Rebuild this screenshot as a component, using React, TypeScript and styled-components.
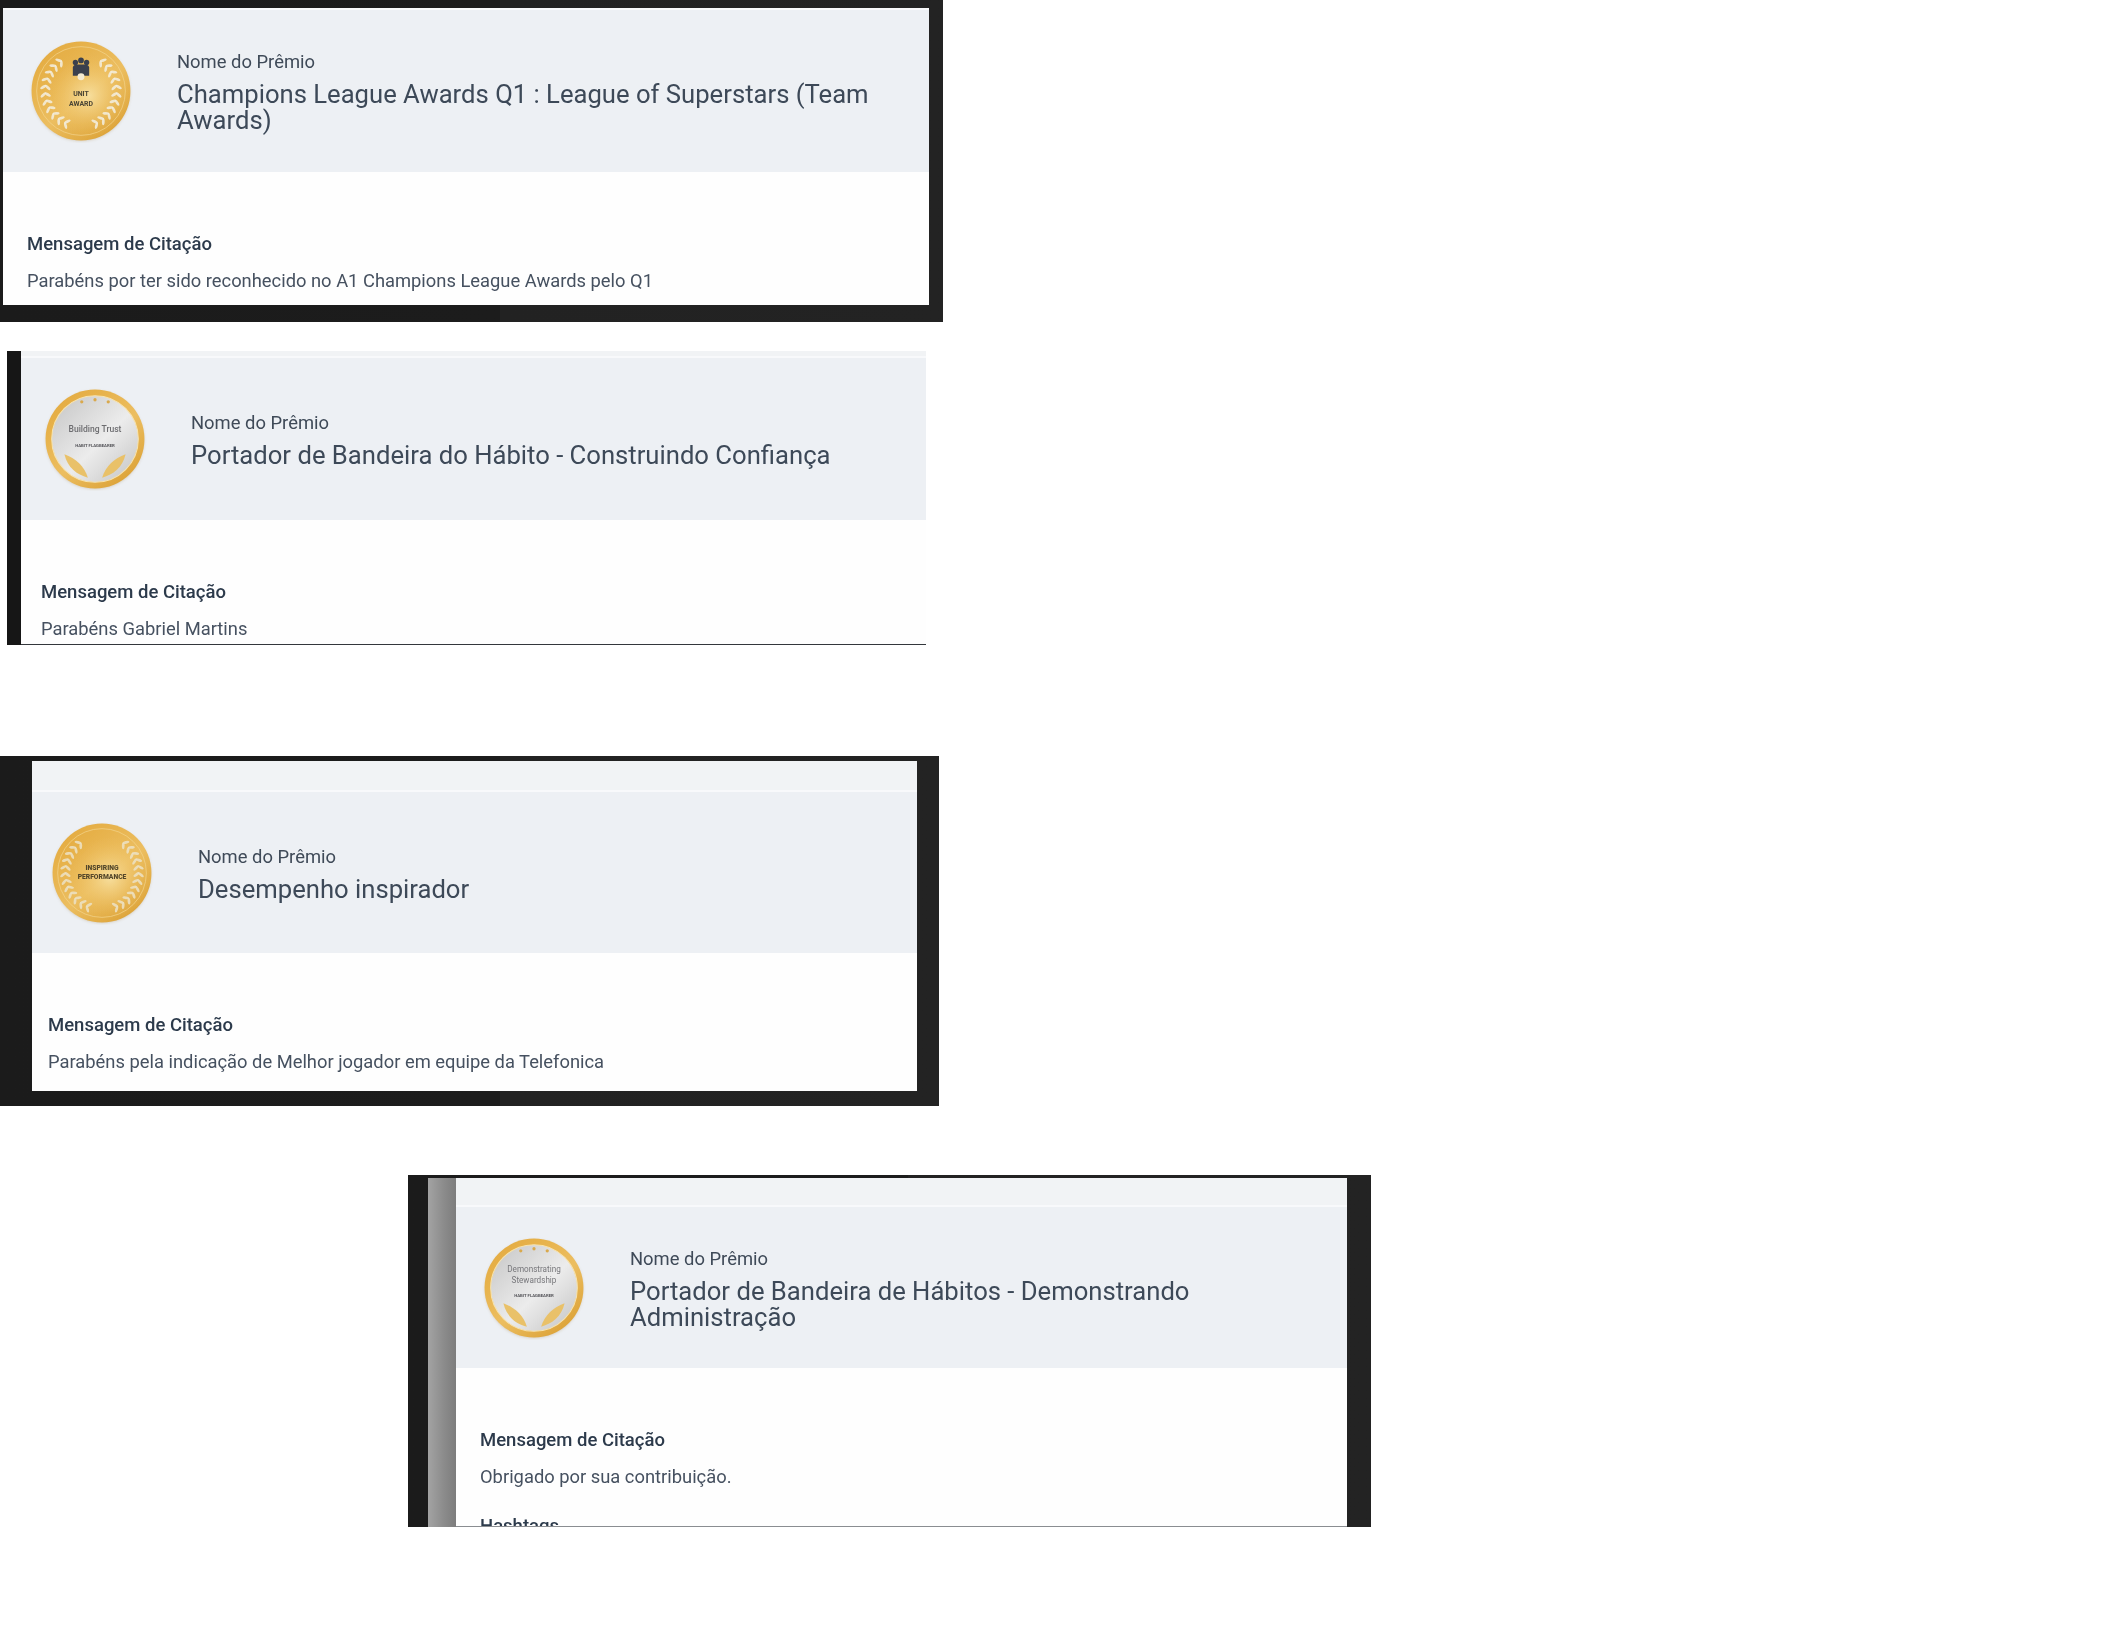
import React from "react";
import styled, { createGlobalStyle } from "styled-components";

const Global = createGlobalStyle`
  html, body { margin: 0; padding: 0; background: #ffffff; }
  body { font-family: Roboto, "Liberation Sans", sans-serif; }
`;

const Page = styled.main`
  display: flex;
  flex-direction: column;
  align-items: flex-start;
  width: 2124px;
  height: 1636px;
  overflow: hidden;
`;

const Frame = styled.section<{ $w: number; $h: number; $ml: number; $mt: number; $pad: string; $bg: string }>`
  display: flex;
  flex: none;
  box-sizing: border-box;
  width: ${(p) => p.$w}px;
  height: ${(p) => p.$h}px;
  margin: ${(p) => p.$mt}px 0 0 ${(p) => p.$ml}px;
  padding: ${(p) => p.$pad};
  background: ${(p) => p.$bg};
`;

const SideShade = styled.div`
  flex: none;
  width: 28px;
  background: linear-gradient(90deg, #a3a3a3 0%, #8a8a8a 60%, #7d7d7d 100%);
`;

const Panel = styled.article<{ $line?: string }>`
  flex: 1;
  min-width: 0;
  display: flex;
  flex-direction: column;
  overflow: hidden;
  background: #fefefe;
  border-bottom: ${(p) => (p.$line ? `1px solid ${p.$line}` : "none")};
`;

const TopStrip = styled.div<{ $h: number }>`
  flex: none;
  box-sizing: border-box;
  height: ${(p) => p.$h}px;
  background: #f1f3f5;
  border-bottom: 2px solid #f8f9fb;
`;

const Header = styled.header<{ $h: number; $inset: number }>`
  flex: none;
  display: flex;
  align-items: center;
  gap: 44px;
  box-sizing: border-box;
  height: ${(p) => p.$h}px;
  padding: 0 30px 0 ${(p) => p.$inset}px;
  background: #edf0f4;
`;

const MedalBox = styled.div`
  flex: none;
  width: 104px;
  height: 104px;
`;

const Titles = styled.div`
  display: flex;
  flex-direction: column;
  gap: 7px;
  min-width: 0;
  padding-top: 1px;
  filter: blur(0.35px);
`;

const AwardLabel = styled.span`
  font-size: 18.4px;
  line-height: 24px;
  color: #3f4a58;
`;

const AwardName = styled.h2`
  margin: 0;
  font-size: 25.65px;
  line-height: 26px;
  font-weight: 400;
  color: #3d4958;
`;

const Body = styled.div<{ $inset: number }>`
  display: flex;
  flex-direction: column;
  gap: 13px;
  padding: 60px 10px 0 ${(p) => p.$inset}px;
  filter: blur(0.35px);
`;

const Heading = styled.h3<{ $mt?: number }>`
  margin: ${(p) => p.$mt ?? 0}px 0 0;
  font-size: 18.5px;
  line-height: 24px;
  font-weight: 500;
  color: #2c3a4b;
`;

const Message = styled.p`
  margin: 0;
  font-size: 18.35px;
  line-height: 24px;
  color: #465160;
`;

type Kind = "unit" | "trust" | "inspiring" | "stewardship";

function Laurel({ color, count, from, to, r }: { color: string; count: number; from: number; to: number; r: number }) {
  const leaves = [];
  for (const side of [-1, 1]) {
    for (let i = 0; i < count; i++) {
      const deg = from + ((to - from) * i) / (count - 1);
      const rad = (deg * Math.PI) / 180;
      const x = 50 + side * r * Math.sin(rad);
      const y = 50 - r * Math.cos(rad);
      for (const tilt of [-38, 38]) {
        const off = tilt > 0 ? 2.2 : -2.2;
        const lx = x + side * off * Math.sin(rad);
        const ly = y - off * Math.cos(rad);
        leaves.push(
          <ellipse
            key={`${side}-${i}-${tilt}`}
            cx={lx}
            cy={ly}
            rx={1.35}
            ry={3.4}
            fill={color}
            opacity={0.85}
            transform={`rotate(${side * (deg - 180 + tilt)} ${lx} ${ly})`}
          />
        );
      }
    }
  }
  return <g>{leaves}</g>;
}

function Medal({ kind }: { kind: Kind }) {
  const id = `m-${kind}`;
  const silver = kind === "trust" || kind === "stewardship";
  return (
    <svg width="104" height="104" viewBox="-1 -1 102 102" role="img" aria-label={kind}>
      <defs>
        <linearGradient id={`${id}-gold`} x1="0.1" y1="0" x2="0.9" y2="1">
          <stop offset="0" stopColor="#e3a93c" />
          <stop offset="0.55" stopColor="#ecbe60" />
          <stop offset="1" stopColor="#d99d30" />
        </linearGradient>
        <radialGradient id={`${id}-shine`} cx="0.58" cy="0.55" r="0.42">
          <stop offset="0" stopColor="#f8e2a4" stopOpacity="0.9" />
          <stop offset="1" stopColor="#f0c15f" stopOpacity="0" />
        </radialGradient>
        <linearGradient id={`${id}-silver`} x1="0" y1="0" x2="1" y2="1">
          <stop offset="0" stopColor="#c4c4c4" />
          <stop offset="0.55" stopColor="#ececec" />
          <stop offset="1" stopColor="#c2c2c2" />
        </linearGradient>
        <filter id={`${id}-soft`} x="-10%" y="-10%" width="120%" height="120%">
          <feGaussianBlur stdDeviation="0.5" />
        </filter>
        <filter id={`${id}-shadow`} x="-20%" y="-20%" width="140%" height="140%">
          <feGaussianBlur stdDeviation="1.4" />
        </filter>
      </defs>
      <circle cx="50" cy="51" r="48" fill="#b9a684" opacity="0.5" filter={`url(#${id}-shadow)`} />
      <g filter={`url(#${id}-soft)`}>
        <circle cx="50" cy="50" r="48.5" fill={`url(#${id}-gold)`} />
        {silver ? (
          <>
            <circle cx="50" cy="50" r="42.5" fill={`url(#${id}-silver)`} stroke="#f6e3b0" strokeWidth="1" />
            <g fill="#d9a94e">
              <circle cx="37" cy="13.5" r="1.6" />
              <circle cx="50" cy="11.5" r="1.6" />
              <circle cx="63" cy="13.5" r="1.6" />
            </g>
            <path d="M20 65 C23 78 32 85 43 88 C40 77 31 69 20 65 Z" fill="#e9c169" />
            <path d="M80 65 C77 78 68 85 57 88 C60 77 69 69 80 65 Z" fill="#e9c169" />
          </>
        ) : (
          <>
            <circle cx="50" cy="50" r="48" fill={`url(#${id}-shine)`} />
            <circle cx="50" cy="50" r="43.5" fill="none" stroke="#f3d48c" strokeWidth="0.7" />
          </>
        )}
        {kind === "unit" && (
          <>
            <Laurel color="#f3eee0" count={11} from={36} to={156} r={35} />
            <g fill="#3a414e">
              <circle cx="44.5" cy="22" r="2.6" />
              <circle cx="50" cy="20" r="2.8" />
              <circle cx="55.5" cy="22" r="2.6" />
              <path d="M42 35 L42 27 C42 25 44 24 46 24 L54 24 C56 24 58 25 58 27 L58 35 Z" />
            </g>
            <circle cx="50" cy="36" r="3.4" fill="#f4ead2" />
            <text x="50" y="55" textAnchor="middle" fontFamily="Roboto, sans-serif" fontWeight="700" fontSize="6.8" fill="#4a4434">UNIT</text>
            <text x="50" y="65" textAnchor="middle" fontFamily="Roboto, sans-serif" fontWeight="700" fontSize="6.8" fill="#4a4434">AWARD</text>
          </>
        )}
        {kind === "inspiring" && (
          <>
            <Laurel color="#ece2c6" count={12} from={38} to={158} r={36} />
            <text x="50" y="47" textAnchor="middle" fontFamily="Roboto, sans-serif" fontWeight="900" fontSize="6.6" fill="#54472a">INSPIRING</text>
            <text x="50" y="56" textAnchor="middle" fontFamily="Roboto, sans-serif" fontWeight="900" fontSize="6.6" fill="#54472a">PERFORMANCE</text>
          </>
        )}
        {kind === "trust" && (
          <>
            <text x="50" y="43" textAnchor="middle" fontFamily="Roboto, sans-serif" fontWeight="500" fontSize="8.4" fill="#6d6d70">Building Trust</text>
            <text x="50" y="58" textAnchor="middle" fontFamily="Roboto, sans-serif" fontWeight="700" fontSize="4.2" fill="#55555a">HABIT FLAGBEARER</text>
          </>
        )}
        {kind === "stewardship" && (
          <>
            <text x="50" y="34" textAnchor="middle" fontFamily="Roboto, sans-serif" fontSize="8" fill="#77777b">Demonstrating</text>
            <text x="50" y="45" textAnchor="middle" fontFamily="Roboto, sans-serif" fontSize="8" fill="#77777b">Stewardship</text>
            <text x="50" y="59" textAnchor="middle" fontFamily="Roboto, sans-serif" fontWeight="700" fontSize="4.2" fill="#55555a">HABIT FLAGBEARER</text>
          </>
        )}
      </g>
    </svg>
  );
}

const darkFrame = "linear-gradient(90deg, #1b1b1b 0, #1c1c1c 500px, #222222 500px, #232323 100%)";

export default function App() {
  return (
    <Page>
      <Global />

      <Frame $w={943} $h={322} $ml={0} $mt={0} $pad="8px 14px 17px 3px" $bg={darkFrame}>
        <Panel>
          <TopStrip $h={2} />
          <Header $h={162} $inset={26}>
            <MedalBox><Medal kind="unit" /></MedalBox>
            <Titles>
              <AwardLabel>Nome do Prêmio</AwardLabel>
              <AwardName>Champions League Awards Q1 : League of Superstars (Team Awards)</AwardName>
            </Titles>
          </Header>
          <Body $inset={24}>
            <Heading>Mensagem de Citação</Heading>
            <Message>Parabéns por ter sido reconhecido no A1 Champions League Awards pelo Q1</Message>
          </Body>
        </Panel>
      </Frame>

      <Frame $w={919} $h={294} $ml={7} $mt={29} $pad="0 0 0 14px" $bg="#161616">
        <Panel $line="#33373c">
          <TopStrip $h={7} />
          <Header $h={162} $inset={22}>
            <MedalBox><Medal kind="trust" /></MedalBox>
            <Titles>
              <AwardLabel>Nome do Prêmio</AwardLabel>
              <AwardName>Portador de Bandeira do Hábito - Construindo Confiança</AwardName>
            </Titles>
          </Header>
          <Body $inset={20}>
            <Heading>Mensagem de Citação</Heading>
            <Message>Parabéns Gabriel Martins</Message>
          </Body>
        </Panel>
      </Frame>

      <Frame $w={939} $h={350} $ml={0} $mt={111} $pad="5px 22px 15px 32px" $bg={darkFrame}>
        <Panel>
          <TopStrip $h={31} />
          <Header $h={161} $inset={18}>
            <MedalBox><Medal kind="inspiring" /></MedalBox>
            <Titles>
              <AwardLabel>Nome do Prêmio</AwardLabel>
              <AwardName>Desempenho inspirador</AwardName>
            </Titles>
          </Header>
          <Body $inset={16}>
            <Heading>Mensagem de Citação</Heading>
            <Message>Parabéns pela indicação de Melhor jogador em equipe da Telefonica</Message>
          </Body>
        </Panel>
      </Frame>

      <Frame $w={963} $h={352} $ml={408} $mt={69} $pad="3px 24px 0 20px" $bg={darkFrame}>
        <SideShade />
        <Panel $line="#8a8d91">
          <TopStrip $h={29} />
          <Header $h={161} $inset={26}>
            <MedalBox><Medal kind="stewardship" /></MedalBox>
            <Titles>
              <AwardLabel>Nome do Prêmio</AwardLabel>
              <AwardName>Portador de Bandeira de Hábitos - Demonstrando Administração</AwardName>
            </Titles>
          </Header>
          <Body $inset={24}>
            <Heading>Mensagem de Citação</Heading>
            <Message>Obrigado por sua contribuição.</Message>
            <Heading $mt={12}>Hashtags</Heading>
          </Body>
        </Panel>
      </Frame>
    </Page>
  );
}
